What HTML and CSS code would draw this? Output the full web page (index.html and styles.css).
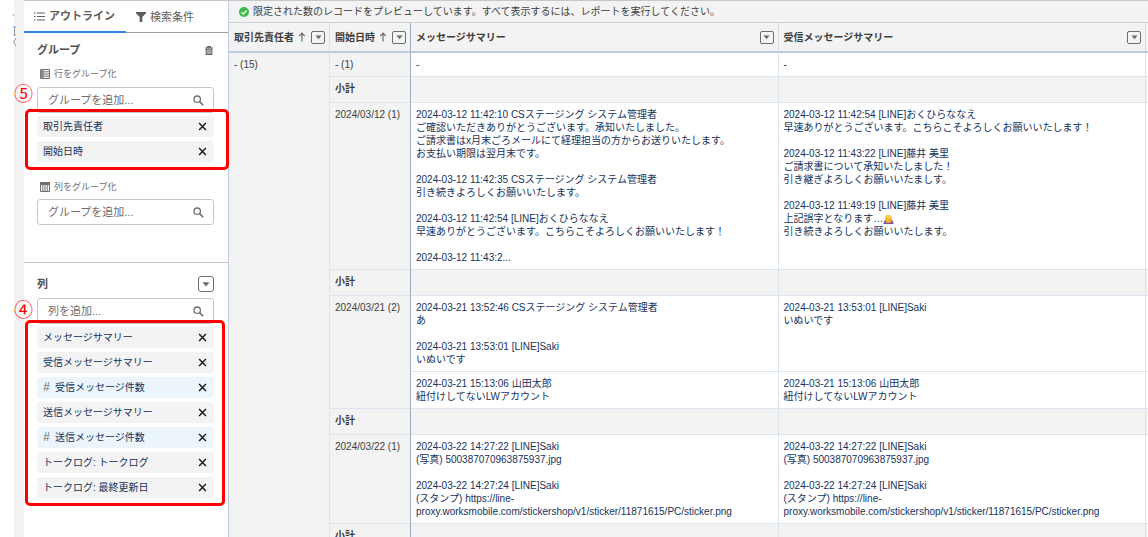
FILE: index.html
```
<!DOCTYPE html>
<html lang="ja">
<head>
    <meta charset="UTF-8">
    <title>レポート</title>
    <link rel="stylesheet" href="styles.css">
</head>
<body>
    <svg class="symbols" width="0" height="0" aria-hidden="true">
        <symbol id="search" viewBox="0 0 12 12">
            <circle cx="4.6" cy="4.6" r="3.5" fill="none" stroke="#706e6b" stroke-width="1.4"/>
            <path d="M7.2 7.2L11 11" stroke="#706e6b" stroke-width="1.7"/>
        </symbol>
        <symbol id="close" viewBox="0 0 10 10">
            <path d="M1.2 1.2L8.8 8.8M8.8 1.2L1.2 8.8" stroke="#181818" stroke-width="1.6"/>
        </symbol>
        <symbol id="down" viewBox="0 0 8 5">
            <path d="M0.5 0.3H7.5L4 4.6Z" fill="#6b6967"/>
        </symbol>
        <symbol id="up" viewBox="0 0 8 10">
            <path d="M4 9.5V1.3M1.2 4.1L4 1.2L6.8 4.1" fill="none" stroke="#6b6967" stroke-width="1.2"/>
        </symbol>
    </svg>
    <div class="page">
        <div class="edge">
            <svg class="edge-mark" width="6" height="52" viewBox="0 0 6 52" aria-hidden="true">
                <path d="M0.5 15H2.5M1 27H4M2.5 27V35M1 35H4M4 38L1.5 42L4 46" fill="none" stroke="#8b9db5"/>
            </svg>
        </div>
        <aside class="sidebar">
            <div class="tabs">
                <button class="tab selected" type="button">
                    <svg width="11" height="9" viewBox="0 0 11 9" aria-hidden="true">
                        <path d="M0 1H1.6M0 4.5H1.6M0 8H1.6M3 1H11M3 4.5H11M3 8H11" stroke="#5f5d5b" stroke-width="1.2"/>
                    </svg>
                    アウトライン
                </button>
                <button class="tab" type="button">
                    <svg width="10" height="10" viewBox="0 0 10 10" aria-hidden="true">
                        <path d="M0 0H10V1.2L6.3 5V10H3.7V5L0 1.2Z" fill="#5f5d5b"/>
                    </svg>
                    検索条件
                </button>
            </div>

            <section class="group">
                <div class="title">
                    <h2>グループ</h2>
                    <button class="trash" type="button" aria-label="削除">
                        <svg width="8" height="9" viewBox="0 0 8 9" aria-hidden="true">
                            <path d="M0 2H8M2.7 1.8V0.6H5.3V1.8" fill="none" stroke="#5f5d5b" stroke-width="1.1"/>
                            <path d="M1.2 3.2V8.4H6.8V3.2ZM3 4V7.6M5 4V7.6" fill="none" stroke="#5f5d5b" stroke-width="1.1"/>
                        </svg>
                    </button>
                </div>
                <label class="caption" for="row-group">
                    <svg width="10" height="10" viewBox="0 0 10 10" aria-hidden="true">
                        <path d="M0.5 0.5H9.5V9.5H0.5ZM3 0.5V9.5M3 2.8H9.5M3 5H9.5M3 7.2H9.5" fill="none" stroke="#706e6b"/>
                        <path d="M0.5 0.5H3V9.5H0.5Z" fill="#8a8885"/>
                    </svg>
                    行をグループ化
                </label>
                <div class="search">
                    <input id="row-group" type="text" placeholder="グループを追加...">
                    <svg width="11" height="11" aria-hidden="true"><use href="#search"/></svg>
                    <span class="number">⑤</span>
                </div>
                <ul class="chips">
                    <li>取引先責任者<button type="button" aria-label="取引先責任者を削除"><svg width="9" height="9"><use href="#close"/></svg></button></li>
                    <li>開始日時<button type="button" aria-label="開始日時を削除"><svg width="9" height="9"><use href="#close"/></svg></button></li>
                    <li class="frame wide" aria-hidden="true"></li>
                </ul>
                <label class="caption second" for="col-group">
                    <svg width="10" height="10" viewBox="0 0 10 10" aria-hidden="true">
                        <path d="M0.5 0.5H9.5V9.5H0.5ZM2.8 3V9.5M5 3V9.5M7.2 3V9.5" fill="none" stroke="#706e6b"/>
                        <path d="M0 0H10V3H0Z" fill="#706e6b"/>
                    </svg>
                    列をグループ化
                </label>
                <div class="search">
                    <input id="col-group" type="text" placeholder="グループを追加...">
                    <svg width="11" height="11" aria-hidden="true"><use href="#search"/></svg>
                </div>
            </section>

            <section class="columns">
                <div class="title">
                    <h2><label for="add-col">列</label></h2>
                    <button class="menu large" type="button" aria-label="列のメニュー"><svg width="8" height="5"><use href="#down"/></svg></button>
                </div>
                <div class="search">
                    <input id="add-col" type="text" placeholder="列を追加...">
                    <svg width="11" height="11" aria-hidden="true"><use href="#search"/></svg>
                    <span class="number">④</span>
                </div>
                <ul class="chips">
                    <li>メッセージサマリー<button type="button" aria-label="削除"><svg width="9" height="9"><use href="#close"/></svg></button></li>
                    <li>受信メッセージサマリー<button type="button" aria-label="削除"><svg width="9" height="9"><use href="#close"/></svg></button></li>
                    <li class="count"><i>#</i>受信メッセージ件数<button type="button" aria-label="削除"><svg width="9" height="9"><use href="#close"/></svg></button></li>
                    <li>送信メッセージサマリー<button type="button" aria-label="削除"><svg width="9" height="9"><use href="#close"/></svg></button></li>
                    <li class="count"><i>#</i>送信メッセージ件数<button type="button" aria-label="削除"><svg width="9" height="9"><use href="#close"/></svg></button></li>
                    <li>トークログ: トークログ<button type="button" aria-label="削除"><svg width="9" height="9"><use href="#close"/></svg></button></li>
                    <li>トークログ: 最終更新日<button type="button" aria-label="削除"><svg width="9" height="9"><use href="#close"/></svg></button></li>
                    <li class="frame" aria-hidden="true"></li>
                </ul>
            </section>
        </aside>

        <main class="preview">
            <p class="notice">
                <svg width="10" height="10" viewBox="0 0 10 10" aria-hidden="true">
                    <circle cx="5" cy="5" r="5" fill="#3bba4c"/>
                    <path d="M2.5 5.2L4.3 7L7.6 3.5" fill="none" stroke="#fff" stroke-width="1.3"/>
                </svg>
                限定された数のレコードをプレビューしています。すべて表示するには、レポートを実行してください。
            </p>
            <table>
                <colgroup>
                    <col class="c-name">
                    <col class="c-date">
                    <col>
                    <col>
                    <col class="c-rest">
                </colgroup>
                <thead>
                    <tr>
                        <th><div class="head">取引先責任者<svg width="8" height="10"><use href="#up"/></svg><button class="menu" type="button" aria-label="メニュー"><svg width="7" height="5"><use href="#down"/></svg></button></div></th>
                        <th><div class="head">開始日時<svg width="8" height="10"><use href="#up"/></svg><button class="menu" type="button" aria-label="メニュー"><svg width="7" height="5"><use href="#down"/></svg></button></div></th>
                        <th class="first"><div class="head">メッセージサマリー<button class="menu" type="button" aria-label="メニュー"><svg width="7" height="5"><use href="#down"/></svg></button></div></th>
                        <th><div class="head">受信メッセージサマリー<button class="menu" type="button" aria-label="メニュー"><svg width="7" height="5"><use href="#down"/></svg></button></div></th>
                        <th></th>
                    </tr>
                </thead>
                <tbody>
                    <tr>
                        <td class="key" rowspan="9">- (15)</td>
                        <td class="key">- (1)</td>
                        <td class="first">-</td>
                        <td>-</td>
                        <td></td>
                    </tr>
                    <tr class="subtotal">
                        <td class="key">小計</td>
                        <td class="first"></td>
                        <td></td>
                        <td></td>
                    </tr>
                    <tr>
                        <td class="key">2024/03/12 (1)</td>
                        <td class="first">2024-03-12 11:42:10 CSステージング システム管理者<br>
                            ご確認いただきありがとうございます。承知いたしました。<br>
                            ご請求書はx月末ごろメールにて経理担当の方からお送りいたします。<br>
                            お支払い期限は翌月末です。<br>
                            <br>
                            2024-03-12 11:42:35 CSステージング システム管理者<br>
                            引き続きよろしくお願いいたします。<br>
                            <br>
                            2024-03-12 11:42:54 [LINE]おくひらななえ<br>
                            早速ありがとうございます。こちらこそよろしくお願いいたします！<br>
                            <br>
                            2024-03-12 11:43:2...</td>
                        <td>2024-03-12 11:42:54 [LINE]おくひらななえ<br>
                            早速ありがとうございます。こちらこそよろしくお願いいたします！<br>
                            <br>
                            2024-03-12 11:43:22 [LINE]藤井 美里<br>
                            ご請求書について承知いたしました！<br>
                            引き継ぎよろしくお願いいたましす。<br>
                            <br>
                            2024-03-12 11:49:19 [LINE]藤井 美里<br>
                            上記誤字となります…<svg class="bow" width="11" height="10" viewBox="0 0 11 10" role="img" aria-label="お辞儀">
                                <path d="M0.3 10L1.8 6H9.2L10.7 10Z" fill="#7b4fa8"/>
                                <circle cx="5.5" cy="4.8" r="3.6" fill="#f5b62e"/>
                                <path d="M2 5Q2 1 5.5 1Q9 1 9 5Q5.5 2.8 2 5Z" fill="#fbd03c"/>
                                <path d="M2.6 9.2L4.2 7.2L5.5 8.3L6.8 7.2L8.4 9.2L5.5 8.8Z" fill="#f0a52c"/>
                            </svg><br>
                            引き続きよろしくお願いいたします。</td>
                        <td></td>
                    </tr>
                    <tr class="subtotal">
                        <td class="key">小計</td>
                        <td class="first"></td>
                        <td></td>
                        <td></td>
                    </tr>
                    <tr>
                        <td class="key" rowspan="2">2024/03/21 (2)</td>
                        <td class="first">2024-03-21 13:52:46 CSステージング システム管理者<br>
                            あ<br>
                            <br>
                            2024-03-21 13:53:01 [LINE]Saki<br>
                            いぬいです</td>
                        <td>2024-03-21 13:53:01 [LINE]Saki<br>
                            いぬいです</td>
                        <td></td>
                    </tr>
                    <tr>
                        <td class="first">2024-03-21 15:13:06 山田太郎<br>
                            紐付けしてないLWアカウント</td>
                        <td>2024-03-21 15:13:06 山田太郎<br>
                            紐付けしてないLWアカウント</td>
                        <td></td>
                    </tr>
                    <tr class="subtotal">
                        <td class="key">小計</td>
                        <td class="first"></td>
                        <td></td>
                        <td></td>
                    </tr>
                    <tr>
                        <td class="key">2024/03/22 (1)</td>
                        <td class="first">2024-03-22 14:27:22 [LINE]Saki<br>
                            (写真) 500387070963875937.jpg<br>
                            <br>
                            2024-03-22 14:27:24 [LINE]Saki<br>
                            (スタンプ) https://line-<wbr>proxy.worksmobile.com/stickershop/v1/sticker/11871615/PC/sticker.png</td>
                        <td>2024-03-22 14:27:22 [LINE]Saki<br>
                            (写真) 500387070963875937.jpg<br>
                            <br>
                            2024-03-22 14:27:24 [LINE]Saki<br>
                            (スタンプ) https://line-<wbr>proxy.worksmobile.com/stickershop/v1/sticker/11871615/PC/sticker.png</td>
                        <td></td>
                    </tr>
                    <tr class="subtotal">
                        <td class="key">小計</td>
                        <td class="first"></td>
                        <td></td>
                        <td></td>
                    </tr>
                </tbody>
            </table>
        </main>
    </div>
</body>
</html>
```

FILE: styles.css
```
* {
    margin: 0;
    padding: 0;
    box-sizing: border-box;
}
body {
    font: 10px/13px "Liberation Sans", "Noto Sans CJK JP", sans-serif;
    color: #3e3e3c;
    background: #fff;
}
button, input {
    font: inherit;
    color: inherit;
}
button {
    background: none;
    border: 0;
    cursor: pointer;
}
ul {
    list-style: none;
}
svg {
    flex: none;
}
.symbols {
    position: absolute;
}
.page {
    display: flex;
    height: 100vh;
    overflow: hidden;
}

/* 左端 */
.edge {
    width: 24px;
    flex: none;
    padding-left: 12px;
    border-right: 10px solid #f3f3f3;
}
.edge-mark {
    display: block;
}

/* サイドバー */
.sidebar {
    width: 204px;
    flex: none;
    border-top: 1px solid #c9c7c5;
}
.tabs {
    display: flex;
    height: 32px;
    border-bottom: 1px solid #a09e9c;
}
.tab {
    display: flex;
    align-items: center;
    gap: 4px;
    flex: 1;
    height: 32px;
    padding-left: 10px;
    font-size: 11px;
    color: #5f5d5b;
}
.tab.selected {
    font-weight: bold;
    border-bottom: 2px solid #2d84e8;
}
.group {
    height: 230px;
    padding: 8px 14px 0 13px;
    border-bottom: 1px solid #c9c7c5;
}
.columns {
    padding: 12px 14px 0 13px;
}
.title {
    display: flex;
    align-items: center;
    justify-content: space-between;
    height: 18px;
}
.title h2 {
    font-size: 11px;
    font-weight: bold;
    color: #514f4d;
}
.trash {
    display: flex;
    padding: 1px;
}
.caption {
    display: flex;
    align-items: center;
    gap: 4px;
    height: 14px;
    margin: 8px 0 6px 3px;
    font-size: 9px;
    color: #706e6b;
}
.caption.second {
    margin: 18px 0 5px 3px;
}
.search {
    display: flex;
    align-items: center;
    position: relative;
    height: 26px;
    padding: 0 9px 0 10px;
    border: 1px solid #c9c7c5;
    border-radius: 3px;
}
.columns .search {
    margin-top: 5px;
}
.search input {
    flex: 1;
    min-width: 0;
    border: 0;
    outline: 0;
    background: none;
    font-size: 11px;
}
.search input::placeholder {
    color: #706e6b;
}
.chips {
    display: flex;
    flex-direction: column;
    gap: 4px;
    position: relative;
    margin-top: 3px;
}
.chips li {
    display: flex;
    align-items: center;
    height: 21px;
    padding: 0 7px 0 6px;
    border-radius: 3px;
    background: #f3f3f3;
    color: #16325c;
}
.chips .count {
    background: #ecf5fc;
}
.chips i {
    width: 12px;
    font-size: 12px;
    color: #706e6b;
}
.chips button {
    display: flex;
    margin-left: auto;
}

/* 赤枠と番号 */
.chips .frame {
    position: absolute;
    top: -7px;
    right: -11px;
    bottom: -8px;
    left: -12px;
    height: auto;
    border: 3px solid #fe0000;
    border-radius: 5px;
    background: none;
    pointer-events: none;
    z-index: 1;
}
.chips .wide {
    right: -15px;
}
.number {
    position: absolute;
    left: -24px;
    top: -5px;
    font: 19px/20px "Noto Sans CJK JP", sans-serif;
    color: #fe0000;
}
.columns .number {
    top: 0;
}

/* プレビュー */
.preview {
    flex: 1;
    min-width: 0;
    border-top: 1px solid #c9c7c5;
    border-left: 1px solid #bccbdd;
    background: #f3f3f3;
}
.notice {
    display: flex;
    align-items: center;
    gap: 4px;
    height: 22px;
    padding-left: 10px;
    border-bottom: 1px solid #d0d0d0;
}
table {
    width: 100%;
    table-layout: fixed;
    border-spacing: 0;
}
.c-name {
    width: 100px;
}
.c-date {
    width: 81px;
}
.c-rest {
    width: 3px;
}
th {
    height: 30px;
    padding: 0 4px 0 5px;
    border-left: 1px solid #d3deeb;
    border-bottom: 2px solid #bccbdd;
    text-align: left;
    white-space: nowrap;
}
td {
    padding: 5px;
    border-left: 1px solid #dbe4ef;
    border-bottom: 1px solid #dbe4ef;
    background: #fff;
    color: #16325c;
    vertical-align: top;
}
th:last-child, td:last-child {
    padding: 0;
}
th:first-child, tbody tr:first-child .key:first-child {
    border-left: 0;
}
td.key {
    padding-right: 0;
    background: #f3f3f3;
    color: #3e3e3c;
    white-space: nowrap;
}
th.first, td.first {
    border-left: 1px solid #9aabc0;
}
.subtotal td {
    height: 26px;
    background: #f3f3f3;
    font-weight: bold;
}
.head {
    display: flex;
    align-items: center;
    gap: 4px;
}
.menu {
    display: flex;
    align-items: center;
    justify-content: center;
    width: 14px;
    height: 13px;
    margin-left: auto;
    border: 1px solid #706e6b;
    border-radius: 2px;
    flex: none;
}
.menu.large {
    width: 16px;
    height: 16px;
    border-radius: 3px;
}
.bow {
    vertical-align: -2px;
}
```
